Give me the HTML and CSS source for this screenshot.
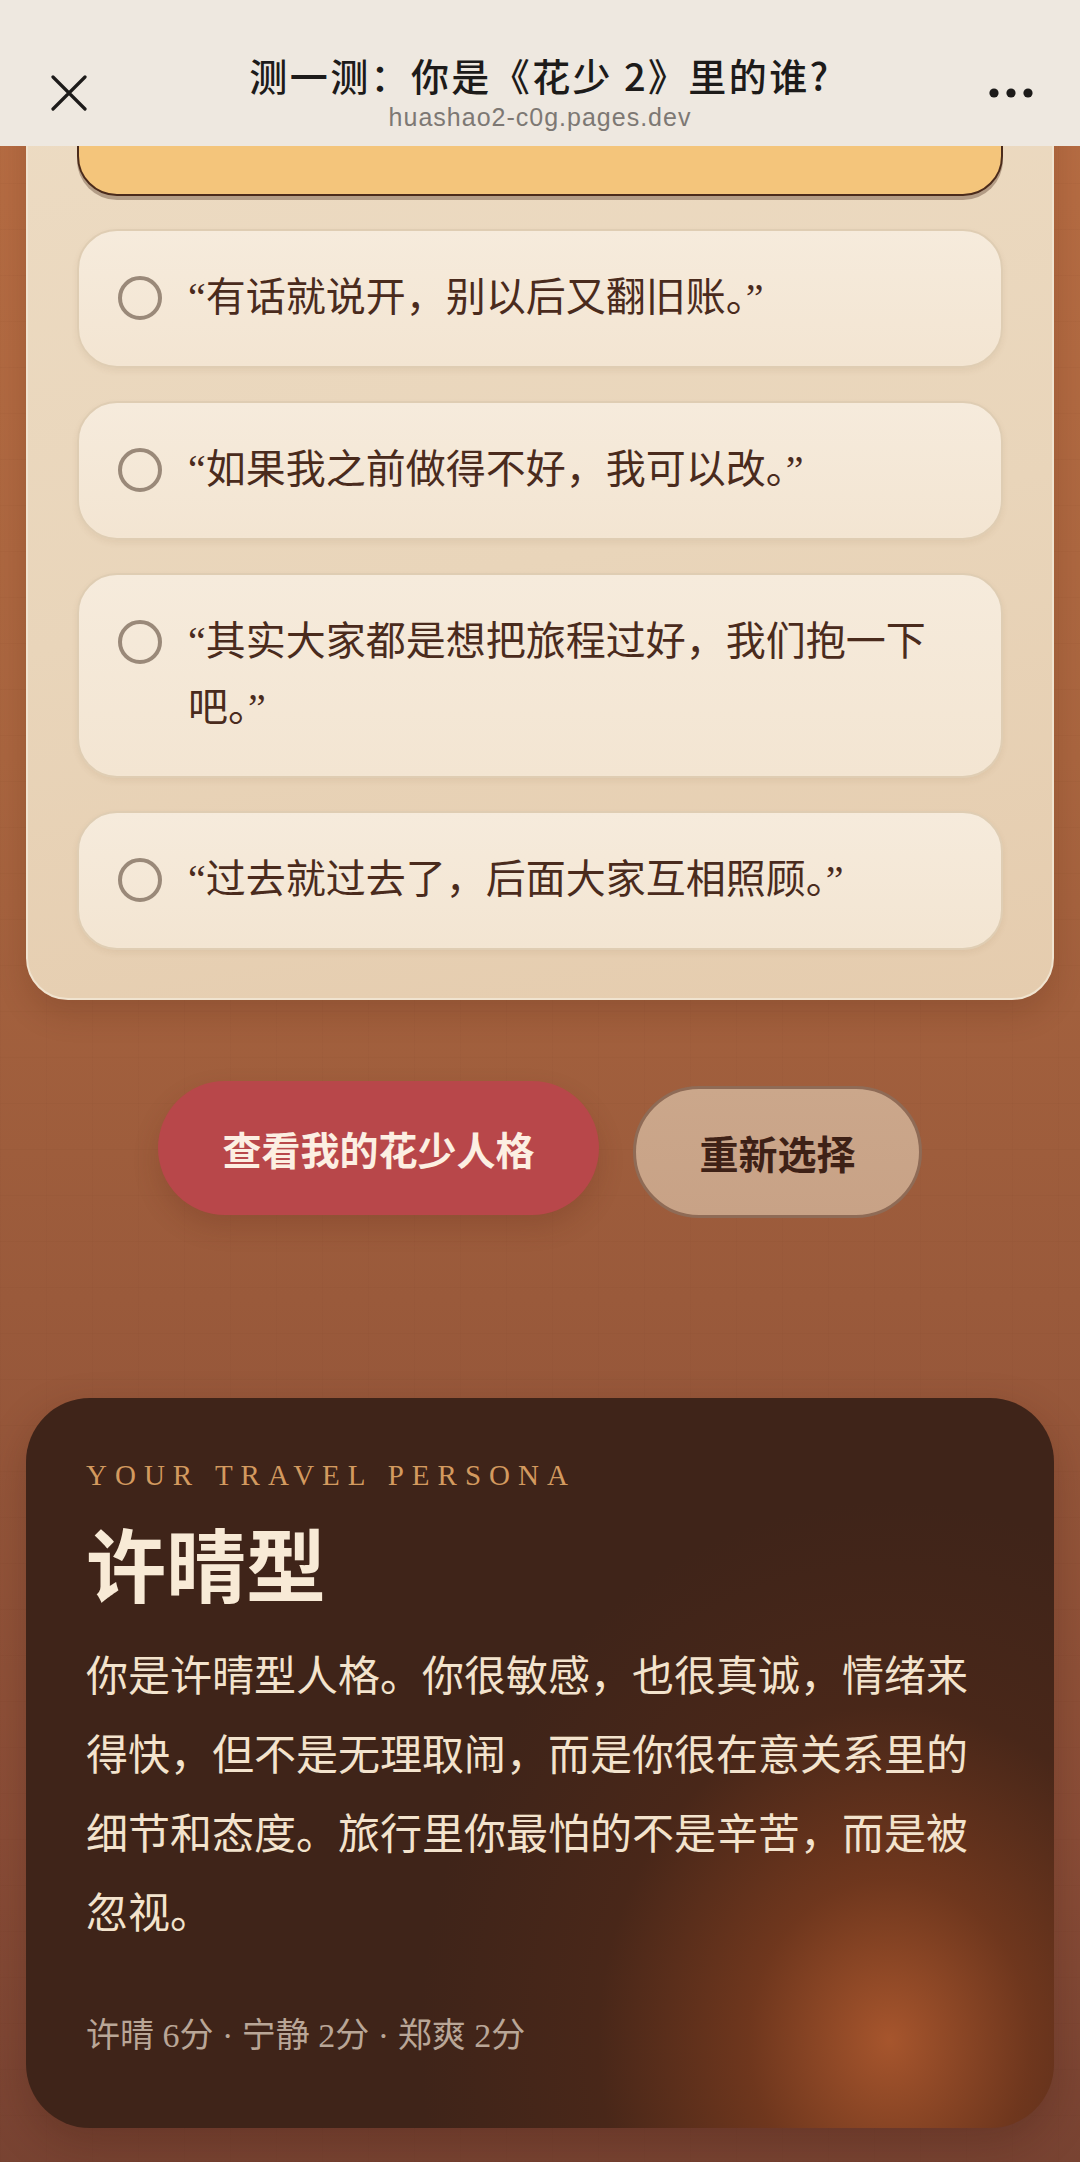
FILE: index.html
```html
<!DOCTYPE html>
<html lang="zh-CN">

<head>
  <meta charset="utf-8">
  <title>测一测：你是《花少 2》里的谁?</title>
  <link rel="stylesheet" href="styles.css">
</head>

<body>
  <div class="topbar">
    <button class="topbar-btn topbar-close" aria-label="关闭">
      <svg width="36" height="36" viewBox="0 0 36 36">
        <path d="M2 2 L34 34 M34 2 L2 34" stroke="#1d1b1a" stroke-width="3.2" stroke-linecap="round" />
      </svg>
    </button>
    <div class="topbar-title">
      <div class="topbar-name">测一测：你是《花少 2》里的谁?</div>
      <div class="topbar-url">huashao2-c0g.pages.dev</div>
    </div>
    <button class="topbar-btn topbar-more" aria-label="更多">
      <svg width="44" height="10" viewBox="0 0 44 10">
        <circle cx="5" cy="5" r="4.6" fill="#1d1b1a" />
        <circle cx="22" cy="5" r="4.6" fill="#1d1b1a" />
        <circle cx="39" cy="5" r="4.6" fill="#1d1b1a" />
      </svg>
    </button>
  </div>

  <div class="page">
    <div class="quiz-card">
      <div class="options">
        <div class="option option-selected"></div>

        <label class="option">
          <span class="radio"></span>
          <span class="option-text">“有话就说开，别以后又翻旧账。”</span>
        </label>

        <label class="option">
          <span class="radio"></span>
          <span class="option-text">“如果我之前做得不好，我可以改。”</span>
        </label>

        <label class="option">
          <span class="radio"></span>
          <span class="option-text">“其实大家都是想把旅程过好，我们抱一下吧。”</span>
        </label>

        <label class="option">
          <span class="radio"></span>
          <span class="option-text">“过去就过去了，后面大家互相照顾。”</span>
        </label>
      </div>
    </div>

    <div class="actions">
      <button class="btn btn-primary">查看我的花少人格</button>
      <button class="btn btn-secondary">重新选择</button>
    </div>

    <div class="result-card">
      <div class="result-eyebrow">YOUR TRAVEL PERSONA</div>
      <div class="result-name">许晴型</div>
      <p class="result-text">你是许晴型人格。你很敏感，也很真诚，情绪来得快，但不是无理取闹，而是你很在意关系里的细节和态度。旅行里你最怕的不是辛苦，而是被忽视。</p>
      <div class="result-scores">许晴 6分 · 宁静 2分 · 郑爽 2分</div>
    </div>
  </div>
</body>

</html>
```

FILE: styles.css
```css
body {
  margin: 0;
  min-height: 100vh;
  font-family: "Liberation Serif", "Noto Sans CJK SC", serif;
  color: #4a2b1d;
  background-color: #9a5a3b;
  background-image:
    repeating-linear-gradient(0deg, rgba(70, 25, 5, 0.03) 0 1px, transparent 1px 46px),
    repeating-linear-gradient(90deg, rgba(70, 25, 5, 0.025) 0 1px, transparent 1px 46px),
    linear-gradient(180deg, #b86d43 0%, #a9653f 35%, #9a5a3b 60%, #8a4d37 85%, #784332 100%);
}

/* browser bar laid over the scrolled page */
.topbar {
  position: fixed;
  top: 0;
  left: 0;
  right: 0;
  z-index: 10;
  height: 146px;
  display: grid;
  grid-template-columns: 140px 1fr 140px;
  background: #eee8e0;
  font-family: "Noto Sans CJK SC", sans-serif;
}

.topbar-btn {
  border: 0;
  background: none;
  padding: 0;
  align-self: start;
  display: flex;
}

.topbar-close {
  margin: 75px 0 0 51px;
}

.topbar-more {
  justify-self: end;
  margin: 88px 47px 0 0;
}

.topbar-title {
  display: flex;
  flex-direction: column;
  align-items: center;
  padding-top: 47px;
}

.topbar-name {
  font-size: 38px;
  line-height: 55px;
  letter-spacing: 2.4px;
  font-weight: 500;
  color: #1d1b1a;
  white-space: nowrap;
}

.topbar-url {
  margin-top: 1px;
  font-family: "Liberation Sans", sans-serif;
  font-size: 25px;
  line-height: 28px;
  letter-spacing: 1px;
  color: #7d7874;
}

.page {
  padding: 4px 26px 34px;
}

.quiz-card {
  border: 2px solid #f0e3cf;
  border-radius: 42px;
  padding: 51px 49px 48px;
  background: linear-gradient(170deg, #eddcc4 0%, #e9d5ba 55%, #e5ccae 100%);
  box-shadow: 0 14px 30px rgba(70, 30, 10, 0.18);
}

.options {
  display: flex;
  flex-direction: column;
  gap: 33px;
}

.option {
  display: flex;
  align-items: flex-start;
  gap: 26px;
  padding: 34px 70px 35px 39px;
  border: 2px solid #dfcdb3;
  border-radius: 40px;
  background: linear-gradient(180deg, #f6ebdc, #f3e5d2);
  box-shadow: 0 3px 6px rgba(120, 80, 40, 0.08);
}

.option-selected {
  height: 139px;
  box-sizing: border-box;
  padding: 0;
  border-color: #4b2b1b;
  background: #f4c57b;
  box-shadow: 0 4px 0 rgba(75, 43, 27, 0.35);
}

.radio {
  flex: none;
  width: 44px;
  height: 44px;
  margin-top: 11px;
  box-sizing: border-box;
  border: 4px solid #9a8979;
  border-radius: 50%;
}

.option-text {
  font-size: 40px;
  line-height: 66px;
  color: #4a2b1d;
}

.actions {
  display: flex;
  justify-content: center;
  align-items: center;
  gap: 34px;
  height: 134px;
  margin-top: 83px;
}

.btn {
  font-family: "Noto Sans CJK SC", sans-serif;
  font-weight: 700;
  border-radius: 70px;
  cursor: pointer;
}

.btn-primary {
  width: 441px;
  height: 134px;
  border: 0;
  font-size: 39px;
  color: #fcefe2;
  background: #b8474a;
  box-shadow: 0 12px 26px rgba(90, 35, 20, 0.2);
  transform: translateY(-2px);
}

.btn-secondary {
  width: 289px;
  height: 132px;
  border: 3px solid #8f6b56;
  font-size: 39px;
  color: #3e2116;
  background: linear-gradient(180deg, #cba78b, #c8a286);
  transform: translateY(2px);
}

.result-card {
  margin-top: 181px;
  border-radius: 64px;
  padding: 60px 60px 68px;
  background:
    radial-gradient(ellipse 470px 540px at 84% 88%, rgba(172, 88, 46, 0.95) 0%, rgba(140, 66, 32, 0.62) 30%, rgba(95, 46, 25, 0.3) 62%, rgba(63, 36, 25, 0) 100%),
    #3f2419;
  box-shadow: 0 16px 40px rgba(50, 20, 10, 0.25);
}

.result-eyebrow {
  font-family: "Liberation Serif", serif;
  font-size: 29px;
  line-height: 35px;
  letter-spacing: 8px;
  color: #d39a5f;
}

.result-name {
  margin-top: 20px;
  font-family: "Noto Sans CJK SC", sans-serif;
  font-size: 80px;
  line-height: 96px;
  font-weight: 700;
  color: #f8ead6;
}

.result-text {
  margin: 29px 0 0;
  font-size: 42px;
  line-height: 79px;
  color: #f3e3cd;
}

.result-scores {
  margin-top: 58px;
  font-size: 34px;
  line-height: 48px;
  color: #b9a697;
}
```
